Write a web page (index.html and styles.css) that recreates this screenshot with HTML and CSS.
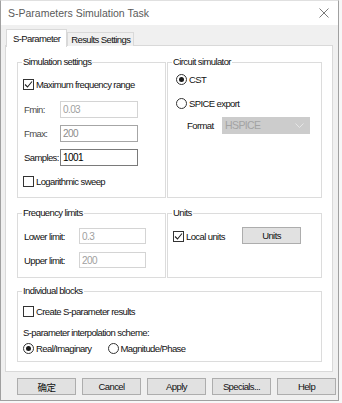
FILE: index.html
```html
<!DOCTYPE html>
<html lang="en">
<head>
    <meta charset="UTF-8">
    <meta name="viewport" content="width=device-width, initial-scale=1.0">
    <title>S-Parameters Simulation Task</title>
    <link rel="stylesheet" href="styles.css">
</head>
<body>

    <div class="dialog">

        <!-- Title bar -->
        <div class="titlebar">
            <span class="title">S-Parameters Simulation Task</span>
            <svg class="close" width="10" height="10" viewBox="0 0 10 10">
                <path d="M0.5 0.5 L9.5 9.5 M9.5 0.5 L0.5 9.5" stroke="#7a7a7a" stroke-width="1" fill="none"/>
            </svg>
        </div>

        <!-- Tabs -->
        <div class="tabs">
            <div class="tab active">S-Parameter</div>
            <div class="tab">Results Settings</div>
        </div>

        <div class="panel">
            <div class="grid">

                <!-- Simulation settings -->
                <fieldset class="group sim">
                    <legend>Simulation settings</legend>
                    <div class="row first">
                        <span class="check checked">
                            <svg width="9" height="9" viewBox="0 0 9 9"><path d="M1 4.5 L3.5 7 L8 1.5" stroke="#222" stroke-width="1.1" fill="none"/></svg>
                        </span>
                        <span>Maximum frequency range</span>
                    </div>
                    <div class="row">
                        <label class="lbl dim" for="fmin">Fmin:</label>
                        <input class="field light" id="fmin" type="text" value="0.03" disabled>
                    </div>
                    <div class="row">
                        <label class="lbl dim" for="fmax">Fmax:</label>
                        <input class="field mid" id="fmax" type="text" value="200" disabled>
                    </div>
                    <div class="row">
                        <label class="lbl" for="samples">Samples:</label>
                        <input class="field" id="samples" type="text" value="1001">
                    </div>
                    <div class="row">
                        <span class="check"></span>
                        <span>Logarithmic sweep</span>
                    </div>
                </fieldset>

                <!-- Circuit simulator -->
                <fieldset class="group circuit">
                    <legend>Circuit simulator</legend>
                    <div class="row first indent">
                        <span class="radio checked"></span>
                        <span>CST</span>
                    </div>
                    <div class="row indent">
                        <span class="radio"></span>
                        <span>SPICE export</span>
                    </div>
                    <div class="row format">
                        <span class="format-lbl">Format</span>
                        <div class="select">
                            <span>HSPICE</span>
                            <svg width="9" height="5" viewBox="0 0 9 5"><path d="M0.5 0.5 L4.5 4.5 L8.5 0.5" stroke="#e6e6e6" fill="none"/></svg>
                        </div>
                    </div>
                </fieldset>

                <!-- Frequency limits -->
                <fieldset class="group limits">
                    <legend>Frequency limits</legend>
                    <div class="row first">
                        <label class="lbl wide" for="lower">Lower limit:</label>
                        <input class="field light short" id="lower" type="text" value="0.3" disabled>
                    </div>
                    <div class="row">
                        <label class="lbl wide" for="upper">Upper limit:</label>
                        <input class="field light short" id="upper" type="text" value="200" disabled>
                    </div>
                </fieldset>

                <!-- Units -->
                <fieldset class="group units">
                    <legend>Units</legend>
                    <div class="row first">
                        <span class="check checked">
                            <svg width="9" height="9" viewBox="0 0 9 9"><path d="M1 4.5 L3.5 7 L8 1.5" stroke="#222" stroke-width="1.1" fill="none"/></svg>
                        </span>
                        <span class="local">Local units</span>
                        <button class="btn units-btn" type="button">Units</button>
                    </div>
                </fieldset>

                <!-- Individual blocks -->
                <fieldset class="group blocks">
                    <legend>Individual blocks</legend>
                    <div class="row first">
                        <span class="check"></span>
                        <span>Create S-parameter results</span>
                    </div>
                    <div class="row spaced">
                        <span>S-parameter interpolation scheme:</span>
                    </div>
                    <div class="row">
                        <span class="radio checked"></span>
                        <span class="opt">Real/Imaginary</span>
                        <span class="radio"></span>
                        <span>Magnitude/Phase</span>
                    </div>
                </fieldset>

            </div>
        </div>

        <!-- Dialog buttons -->
        <div class="buttons">
            <button class="btn" type="button">确定</button>
            <button class="btn" type="button">Cancel</button>
            <button class="btn" type="button">Apply</button>
            <button class="btn" type="button">Specials...</button>
            <button class="btn" type="button">Help</button>
        </div>

    </div>

</body>
</html>
```

FILE: styles.css
```css
body {
    margin: 0;
    padding: 0;
    background-color: #f7f7f7;
    font-family: "Liberation Sans", Arial, "Noto Sans CJK SC", sans-serif;
    font-size: 9.5px;
    letter-spacing: -0.6px;
    color: #111;
}

.dialog {
    width: 339px;
    height: 401px;
    box-sizing: border-box;
    border: 1px solid #a0a0a0;
    border-top-color: #e0e0e0;
    background-color: #f0f0f0;
    display: flex;
    flex-direction: column;
}

.titlebar {
    height: 24px;
    background-color: #fff;
    display: flex;
    align-items: center;
    justify-content: space-between;
    padding: 0 9px 0 7px;
}

.title {
    font-size: 10.5px;
    letter-spacing: 0;
    color: #5a5a5a;
}

.tabs {
    display: flex;
    align-items: flex-end;
    height: 17px;
    margin: 4px 0 0 5px;
    position: relative;
    z-index: 1;
}

.tab {
    height: 14px;
    line-height: 14px;
    padding: 0 3px;
    border: 1px solid #d9d9d9;
    border-bottom: none;
    background-color: #f0f0f0;
    box-sizing: border-box;
}

.tab.active {
    height: 18px;
    line-height: 17px;
    padding: 0 6px;
    background-color: #fff;
    margin-bottom: -1px;
}

.panel {
    margin: -1px 5px 0 4px;
    height: 327px;
    box-sizing: border-box;
    background-color: #fff;
    border: 1px solid #d9d9d9;
    padding: 10px 10px 0 11px;
}

.grid {
    display: grid;
    grid-template-columns: 149px 155px;
    column-gap: 1px;
}

.group {
    margin: 0;
    padding: 0 5px;
    border: 1px solid #dcdcdc;
    min-width: 0;
    box-sizing: border-box;
}

.group legend {
    padding: 0 1px;
    margin-left: -1px;
    line-height: 12px;
}

.sim, .circuit {
    height: 142px;
}

.limits, .units {
    height: 71px;
    margin-top: 9px;
}

.blocks {
    grid-column: 1 / 3;
    height: 77px;
    margin-top: 7px;
}

.row {
    display: flex;
    align-items: center;
    height: 20px;
    margin-top: 4px;
    white-space: nowrap;
}

.sim .row.first {
    margin-top: 6px;
    margin-bottom: 5px;
}

.circuit .row.first {
    margin-top: 1px;
}

.circuit .row.format {
    margin-top: 2px;
}

.indent {
    padding-left: 3px;
}

.limits .row.first,
.units .row.first {
    margin-top: 7px;
}

.blocks .row {
    height: 16px;
    margin-top: 0;
}

.blocks .row.first {
    margin-top: 6px;
}

.blocks .row.spaced {
    margin-top: 5px;
}

.check {
    width: 11px;
    height: 11px;
    box-sizing: border-box;
    border: 1px solid #333;
    background-color: #fff;
    margin-right: 2px;
    display: flex;
    align-items: center;
    justify-content: center;
    flex-shrink: 0;
}

.radio {
    width: 11px;
    height: 11px;
    box-sizing: border-box;
    border: 1px solid #333;
    border-radius: 50%;
    background-color: #fff;
    margin-right: 2px;
    display: flex;
    align-items: center;
    justify-content: center;
    flex-shrink: 0;
}

.radio.checked::after {
    content: "";
    width: 5px;
    height: 5px;
    border-radius: 50%;
    background-color: #1a1a1a;
}

.opt {
    margin-right: 16px;
}

.lbl {
    width: 36px;
    flex-shrink: 0;
    padding-left: 1px;
}

.lbl.wide {
    width: 55px;
}

.dim {
    color: #4a4a4a;
}

.field {
    width: 78px;
    height: 17px;
    box-sizing: border-box;
    border: 1px solid #7a7a7a;
    background-color: #fff;
    padding: 0 2px;
    font-family: inherit;
    font-size: 10px;
    letter-spacing: inherit;
    color: #000;
    outline: none;
}

.field.mid {
    border-color: #a6a6a6;
    color: #8c8c8c;
}

.field.light {
    border-color: #d4d4d4;
    color: #a0a0a0;
}

.field.short {
    width: 67px;
    height: 16px;
}

.format-lbl {
    width: 35px;
    padding-left: 14px;
}

.select {
    width: 88px;
    height: 17px;
    box-sizing: border-box;
    background-color: #cccccc;
    color: #a3a3a3;
    display: flex;
    align-items: center;
    justify-content: space-between;
    padding: 0 6px 0 3px;
    font-size: 10.5px;
}

.local {
    width: 56px;
}

.btn {
    height: 17px;
    box-sizing: border-box;
    border: 1px solid #adadad;
    background-color: #e1e1e1;
    font-family: inherit;
    font-size: 9.5px;
    letter-spacing: inherit;
    color: #111;
    padding: 0;
}

.units-btn {
    width: 59px;
    margin-top: -1px;
}

.buttons {
    display: flex;
    gap: 6px;
    margin: 6px 0 0 16px;
}

.buttons .btn {
    width: 59px;
}
```
